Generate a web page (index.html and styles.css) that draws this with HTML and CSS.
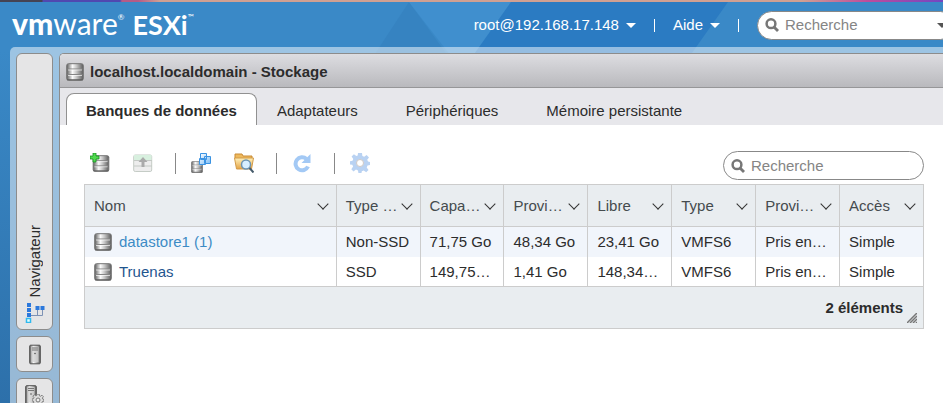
FILE: index.html
```html
<!DOCTYPE html>
<html lang="fr">
<head>
<meta charset="utf-8">
<title>localhost.localdomain - Stockage</title>
<link rel="stylesheet" href="styles.css">
</head>
<body>
<svg class="symbols" aria-hidden="true">
  <defs>
    <linearGradient id="metal"><stop offset="0" stop-color="#5c5c5c"/><stop offset=".15" stop-color="#a0a0a0"/><stop offset=".35" stop-color="#fafafa"/><stop offset=".6" stop-color="#c4c4c4"/><stop offset="1" stop-color="#5c5c5c"/></linearGradient>
    <linearGradient id="folder" x2="0" y2="1"><stop offset="0" stop-color="#fff2bd"/><stop offset="1" stop-color="#e5a343"/></linearGradient>
    <linearGradient id="cube" x2="1" y2="1"><stop offset="0" stop-color="#fff"/><stop offset="1" stop-color="#78baf5"/></linearGradient>
    <symbol id="disk" viewBox="0 0 18 18"><rect x=".7" y=".7" width="16.6" height="16.6" rx="1.800" fill="url(#metal)" stroke="#747474"/><path d="M1.500 6h15M1.500 11.500h15" fill="none" stroke="#858585"/><path d="M2 7h14M2 12.500h14" fill="none" stroke="#fff" opacity=".65"/><path d="M1 16.800h16" stroke="#5a5a5a"/></symbol>
    <symbol id="search" viewBox="0 0 14 14"><circle cx="6" cy="5.700" r="4.400" fill="none" stroke="#777" stroke-width="2.500"/><path d="M9 9l4 4" stroke="#777" stroke-width="2.800"/></symbol>
    <symbol id="server" viewBox="0 0 12 20"><rect x=".7" y=".7" width="10.600" height="18.600" rx="1" fill="url(#metal)" stroke="#505050"/><rect x="2.500" y="2" width="7" height="15.500" fill="#d3d3d3" opacity=".8"/><path d="M3 3.500h6M3 5.500h6" stroke="#777"/><circle cx="6" cy="9" r=".8" fill="#555"/></symbol>
    <symbol id="gear" viewBox="0 0 20 20"><path d="M8 0h4l.4 3 1.800.8 2.400-1.800 2.400 2.400-1.800 2.400.8 1.800 2 .4v3l-2.500.4-.8 2 1.800 2.500-2.300 2.300-2.500-1.800-1.900.8-.4 2.300H8.500L8 17.400l-2-.8L3.500 18.400l-2.200-2.200 1.800-2.600-.8-1.800L0 11.500V8.300l2.500-.5.8-1.900-1.700-2.300 2.300-2.300 2.500 1.800 1.300-.5z"/></symbol>
  </defs>
</svg>
<svg class="facets" viewBox="0 0 943 60" preserveAspectRatio="none" aria-hidden="true"><path fill="#3683c1" d="M409 2L371 60h80z"/><path fill="#408fce" d="M409 2h102l-41 58h-16z"/><path fill="#2b7bc2" d="M511 2h217l-41 58H470z"/></svg>
<header class="topbar">
  <a class="brand" href="#"><span class="vm">vm</span><span>ware</span><sup>®</sup><span class="esxi">ESXi</span><sup>™</sup></a>
  <nav class="account">
    <button type="button">root@192.168.17.148<i class="caret"></i></button><i class="bar"></i>
    <button type="button">Aide<i class="caret"></i></button><i class="bar"></i>
    <label class="search global"><svg><use href="#search"/></svg><input type="text" placeholder="Recherche" aria-label="Recherche globale"><i class="caret dark"></i></label>
  </nav>
</header>
<div class="frame">
  <aside class="rail">
    <button class="pill navigator" type="button"><span>Navigateur</span>
      <svg class="tree" viewBox="0 0 20 20"><path d="M4 12.500h13.500M12.500 6v6.500M17.500 6v6.500" fill="none" stroke="#7d92b5"/><path fill="#2b78dc" d="M2 0h4v4H2zM2 5h4v4H2zM2 10h4v4H2zM10.500 3h4v4h-4zM15.500 3h4v4h-4z"/><path fill="#e2ffff" stroke="#30b9ee" stroke-width="1.500" d="M1.500 15.500h4v4h-4z"/></svg></button>
    <button class="pill" type="button" aria-label="Hôte"><svg class="server"><use href="#server"/></svg></button>
    <button class="pill" type="button" aria-label="Gérer"><svg class="manage" viewBox="0 0 20 22"><use href="#server" width="12" height="20"/><use href="#gear" x="7" y="9" width="12" height="12" fill="#ddd" stroke="#777" stroke-width="1.500"/><circle cx="13" cy="15" r="2" fill="#eee" stroke="#777"/></svg></button>
  </aside>
  <main class="panel">
    <h1 class="title"><svg class="disk"><use href="#disk"/></svg>localhost.localdomain - Stockage</h1>
    <nav class="tabs"><a class="active" href="#">Banques de données</a><a href="#">Adaptateurs</a><a href="#">Périphériques</a><a href="#">Mémoire persistante</a></nav>
    <section class="content">
      <div class="toolbar">
        <button type="button" aria-label="Nouvelle banque de données"><svg viewBox="0 0 20 20"><use href="#disk" x="2" y="2" width="18" height="17"/><path d="M3 0h3v3h3v3H6v3H3V6H0V3h3z" fill="#50da4e" stroke="#179022" stroke-width=".8"/></svg></button>
        <button type="button" disabled aria-label="Augmenter la capacité"><svg viewBox="0 0 20 20"><rect x=".7" y="2" width="18" height="16.500" rx="1.500" fill="#ededed" stroke="#c5ccc6"/><path fill="#d8f0df" d="M1 2h17.500v5H1z"/><path d="M1 7.500h18M1 13h18" stroke="#c4c9c5"/><path fill="#aaa" d="M10 4l4.500 5h-3v5h-3V9h-3z"/></svg></button>
        <i class="rule"></i>
        <button type="button" aria-label="Enregistrer une VM"><svg viewBox="0 0 20 20"><use href="#disk" y="8" width="12" height="12"/><g fill="url(#cube)" stroke="#3b93e2"><path d="M9.500.5h6v6h-6zM13.500 3.500h6v7h-6zM8.500 5.500h6v6h-6z"/></g></svg></button>
        <button type="button" aria-label="Explorateur de banque de données"><svg viewBox="0 0 20 20"><path d="M1 5V1h7l1 2h9v3" fill="#eeb95c" stroke="#c98b35"/><path d="M.5 5h19l-2 11h-15z" fill="url(#folder)" stroke="#d29a48"/><circle cx="12" cy="11.500" r="4.500" fill="#d6eeff" stroke="#6d94b2" stroke-width="1.500"/><path d="M15.500 15l4 4.500" stroke="#465b6b" stroke-width="2"/></svg></button>
        <i class="rule"></i>
        <button type="button" aria-label="Actualiser"><svg viewBox="0 0 20 20"><path d="M14.500 6a6.500 6.500 0 1 0 1.500 7.500" fill="none" stroke="#a3c9f5" stroke-width="4"/><path d="M18.500 1v9h-9z" fill="#a3c9f5"/></svg></button>
        <i class="rule"></i>
        <button type="button" aria-label="Actions"><svg viewBox="0 0 20 20"><use href="#gear" width="20" height="20" fill="#b9d2f2"/><circle cx="10" cy="10" r="3.500" fill="#fff" stroke="#d0c9c5"/></svg></button>
        <label class="search local"><svg><use href="#search"/></svg><input type="text" placeholder="Recherche" aria-label="Recherche"></label>
      </div>
      <table>
        <colgroup><col class="name"><col span="7"></colgroup>
        <thead><tr><th><div><span>Nom</span><i></i></div></th><th><div><span>Type …</span><i></i></div></th><th><div><span>Capa…</span><i></i></div></th><th><div><span>Provi…</span><i></i></div></th><th><div><span>Libre</span><i></i></div></th><th><div><span>Type</span><i></i></div></th><th><div><span>Provi…</span><i></i></div></th><th><div><span>Accès</span><i></i></div></th></tr></thead>
        <tbody>
          <tr><td><a class="hover" href="#"><svg class="disk"><use href="#disk"/></svg>datastore1 (1)</a></td><td>Non-SSD</td><td>71,75 Go</td><td>48,34 Go</td><td>23,41 Go</td><td>VMFS6</td><td>Pris en…</td><td>Simple</td></tr>
          <tr><td><a href="#"><svg class="disk"><use href="#disk"/></svg>Truenas</a></td><td>SSD</td><td>149,75…</td><td>1,41 Go</td><td>148,34…</td><td>VMFS6</td><td>Pris en…</td><td>Simple</td></tr>
        </tbody>
        <tfoot><tr><td colspan="8">2 éléments<svg class="grip" viewBox="0 0 10 10"><path d="M0 10L10 0M3 10l7-7M6 10l4-4M9 10l1-1" stroke="#777" stroke-width="1.500"/></svg></td></tr></tfoot>
      </table>
    </section>
  </main>
</div>
</body>
</html>
```
FILE: styles.css
```css
* { box-sizing: border-box; }
body {
  position: relative;
  margin: 0;
  height: 100vh;
  overflow: hidden;
  display: flex;
  flex-direction: column;
  font: 15px/20px "Liberation Sans", Arial, sans-serif;
  color: #2c2c2c;
  background: linear-gradient(#3a89c7, #3a89c7 50px, #2d70aa);
}
button, input { font: inherit; color: inherit; }
button { padding: 0; border: 0; background: none; }
a { color: inherit; text-decoration: none; }
svg { display: block; flex: none; }
.symbols { position: absolute; width: 0; height: 0; }
.facets { position: absolute; left: 0; top: 0; width: 100%; height: 60px; }

.topbar {
  position: relative;
  flex: none;
  height: 47px;
  display: flex;
  align-items: center;
  justify-content: space-between;
  padding: 3px 0 0 12px;
  overflow: hidden;
  color: #fff;
}
.topbar::before {
  content: "";
  position: absolute;
  inset: 0 0 auto;
  height: 2px;
  background: linear-gradient(90deg, #454353 0 42px, #5048b0 43px 120px, #b55b87 122px 138px, #d0a092 160px 85%, #bd4c9c 92%, #7247c2);
}
.brand { display: flex; align-items: baseline; font: 30px/40px Lato, sans-serif; padding-bottom: 2px; }
.vm { font-weight: 900; }
.brand sup { align-self: flex-start; margin-top: 10px; font-size: 8px; line-height: 8px; }
.esxi { margin-left: 8px; font-size: 27px; font-weight: 700; }
.account { display: flex; align-items: center; }
.account button { display: flex; align-items: center; gap: 7px; }
.caret { border: 5px solid transparent; border-top-color: #fff; border-bottom: 0; }
.bar { width: 1px; height: 13px; margin: 0 18px; background: #fff; }
.search {
  display: flex;
  align-items: center;
  gap: 6px;
  height: 29px;
  padding: 0 7px;
  border: 1px solid #888;
  border-radius: 15px;
  background: #fff;
}
.search svg { width: 14px; height: 14px; }
.search input { flex: 1; min-width: 0; padding: 0; border: 0; outline: 0; background: none; }
.search input::placeholder { color: #858585; opacity: 1; }
.global { width: 198px; margin-right: -12px; }
.caret.dark { border-top-color: #555; }

.frame {
  position: relative;
  flex: 1;
  min-height: 0;
  display: flex;
  gap: 6px;
  margin-left: 10px;
  padding: 6px 0 0 6px;
  border-top-left-radius: 5px;
  background: rgba(255, 255, 255, .5);
}
.rail { width: 37px; display: flex; flex-direction: column; gap: 6px; }
.pill {
  flex: none;
  display: flex;
  align-items: center;
  justify-content: center;
  height: 36px;
  border: 1px solid #8c8c8c;
  border-radius: 6px;
  background: #e5e5e6;
}
.navigator { height: 277px; flex-direction: column; justify-content: flex-end; gap: 5px; padding-bottom: 6px; }
.navigator span { writing-mode: vertical-rl; transform: rotate(180deg); }
.tree { width: 20px; height: 20px; }
.server { width: 12px; height: 21px; }
.manage { width: 20px; height: 22px; }

.panel {
  flex: 1;
  min-width: 0;
  display: flex;
  flex-direction: column;
  border: solid #8c8c8c;
  border-width: 1px 0 0 1px;
  border-top-left-radius: 5px;
  overflow: hidden;
  background: #fff;
}
.title {
  display: flex;
  align-items: center;
  gap: 6px;
  height: 34px;
  margin: 0;
  padding: 2px 6px 0;
  font-size: 15px;
  border-bottom: 1px solid #969698;
  background: linear-gradient(#dddde1, #b9b9bd);
}
.disk { width: 18px; height: 18px; }
.tabs { display: flex; height: 37px; padding: 5px 0 0 6px; background: #e7e7eb; }
.tabs a { padding: 8px 24px 0; }
.tabs .active {
  padding: 7px 19px 0;
  margin-right: -4px;
  font-weight: 700;
  border: 1px solid #919191;
  border-bottom: 0;
  border-radius: 8px 8px 0 0;
  background: #fff;
}

.content { padding: 26px 19px 0 24px; }
.toolbar { display: flex; align-items: flex-start; height: 29px; margin-bottom: 4px; padding-left: 6px; }
.toolbar button, .rule { margin-top: 2px; }
.toolbar svg { width: 20px; height: 20px; }
.toolbar button + button { margin-left: 23px; }
.rule { width: 1px; height: 21px; margin-right: 15px; margin-left: 22px; background: #888; }
.toolbar .search { width: 201px; margin-left: auto; }
.search.local svg { width: 14px; height: 14px; }

table {
  width: 100%;
  table-layout: fixed;
  border-collapse: collapse;
  border: 1px solid #ccc;
}
col { width: 10%; }
.name { width: 30%; }
th, td { height: 30px; padding: 0 0 0 9px; text-align: left; border: solid #ccc; border-width: 0 1px; white-space: nowrap; }
th { height: 42px; font-weight: 400; color: #454b4e; border-bottom: 1px solid #ccc; background: #e9edf0; }
th div { display: flex; align-items: center; justify-content: space-between; padding-right: 8px; }
th i { flex: none; width: 8px; height: 8px; margin: -4px 1px 0; border: solid #333; border-width: 0 1px 1px 0; transform: rotate(45deg); }
tbody td { padding-top: 1px; }
tbody tr:first-child { background: #f1f5fb; }
tbody a { display: flex; align-items: center; gap: 7px; color: #1f568f; }
tbody .hover { color: #3c8bc5; }
tfoot td { position: relative; height: 42px; padding-right: 20px; text-align: right; font-weight: 700; border-top: 1px solid #ccc; background: #e9edf0; }
.grip { position: absolute; right: 6px; bottom: 5px; width: 10px; height: 10px; }
```
